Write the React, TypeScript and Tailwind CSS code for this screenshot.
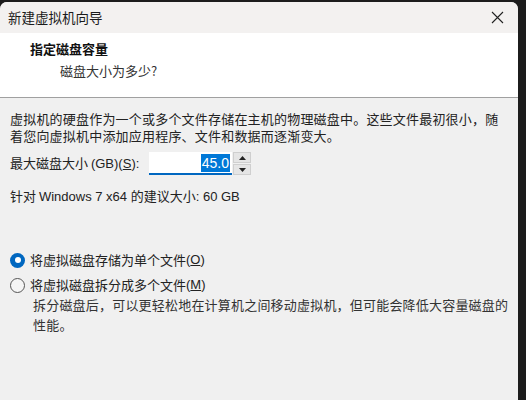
import React from "react";

const cjk = "font-['Noto_Sans_CJK_SC',serif]";
const sans = "font-['Liberation_Sans','Noto_Sans_CJK_SC',sans-serif]";

export default function App() {
  return (
    <div className="w-[526px] h-[400px] bg-[#1c1c1c] overflow-hidden">
      <div className={`w-[518px] h-[400px] mt-[2px] rounded-tl-[7px] rounded-tr-[7px] overflow-hidden bg-[#f0f0f0] flex flex-col ${cjk}`}>
        {/* Title bar */}
        <div className="h-[31px] bg-[#f3f1f0] flex items-center justify-between pl-[8px] pr-[12px] shrink-0">
          <span className="text-[13.5px] text-[#1a1a1a]">新建虚拟机向导</span>
          <svg width="13" height="13" viewBox="0 0 13 13" className="mr-[2px]">
            <path d="M1 1 L12 12 M12 1 L1 12" stroke="#222" strokeWidth="1.1" />
          </svg>
        </div>
        {/* Header */}
        <div className="h-[65px] bg-white border-b border-[#a0a0a0] shrink-0 pt-[7px] flex flex-col gap-[5px]">
          <div className="pl-[30px] text-[13px] font-bold text-[#111] leading-[17px]">指定磁盘容量</div>
          <div className="pl-[60px] text-[13px] text-[#333] leading-[17px]">磁盘大小为多少?</div>
        </div>
        {/* Body */}
        <div className="pl-[10px] pt-[12px] text-[13px] text-[#222] flex flex-col">
          <div className="flex flex-col tracking-[0.2px] whitespace-nowrap">
            <div className="h-[17px] leading-[17px]">虚拟机的硬盘作为一个或多个文件存储在主机的物理磁盘中。这些文件最初很小，随</div>
            <div className="h-[17px] leading-[17px]">着您向虚拟机中添加应用程序、文件和数据而逐渐变大。</div>
          </div>
          <div className="flex items-center mt-[8px] h-[23px]">
            <span className="w-[139px] whitespace-nowrap">
              最大磁盘大小 <span className={sans}>(GB)(<span className="underline">S</span>):</span>
            </span>
            <div className="w-[83px] h-[23px] bg-white border-b-2 border-[#0067c0] flex items-center justify-end pr-[2px]">
              <span className={`bg-[#0078d7] text-white text-[14px] leading-[18px] px-px ${sans}`}>45.0</span>
            </div>
            <div className="w-[18px] h-[23px] ml-px flex flex-col gap-px">
              <div className="flex-1 bg-[#e5e5e5] border border-[#cfcfcf] flex items-center justify-center">
                <svg width="7" height="4" viewBox="0 0 7 4"><path d="M0 4 L3.5 0 L7 4 Z" fill="#222" /></svg>
              </div>
              <div className="flex-1 bg-[#e5e5e5] border border-[#cfcfcf] flex items-center justify-center">
                <svg width="7" height="4" viewBox="0 0 7 4"><path d="M0 0 L3.5 4 L7 0 Z" fill="#222" /></svg>
              </div>
            </div>
          </div>
          <div className="mt-[12px] leading-[17px]">
            <span>针对 </span>
            <span className={sans}>Windows 7 x64 </span>
            <span>的建议大小</span>
            <span className={sans}>: 60 GB</span>
          </div>
          <div className="mt-[46px] flex items-center h-[18px]">
            <span className="w-[15px] h-[15px] rounded-full bg-[#0067c0] flex items-center justify-center">
              <span className="w-[6px] h-[6px] rounded-full bg-white" />
            </span>
            <span className="ml-[5px]">将虚拟磁盘存储为单个文件</span>
            <span className={sans}>(<span className="underline">O</span>)</span>
          </div>
          <div className="mt-[7px] flex items-center h-[18px]">
            <span className="w-[15px] h-[15px] rounded-full border border-[#555] bg-[#f5f5f5]" />
            <span className="ml-[5px]">将虚拟磁盘拆分成多个文件</span>
            <span className={sans}>(<span className="underline">M</span>)</span>
          </div>
          <div className="pl-[23px] mt-px flex flex-col text-[#333] tracking-[0.2px] whitespace-nowrap">
            <div className="h-[20px] leading-[20px]">拆分磁盘后，可以更轻松地在计算机之间移动虚拟机，但可能会降低大容量磁盘的</div>
            <div className="h-[20px] leading-[20px]">性能。</div>
          </div>
        </div>
      </div>
    </div>
  );
}
